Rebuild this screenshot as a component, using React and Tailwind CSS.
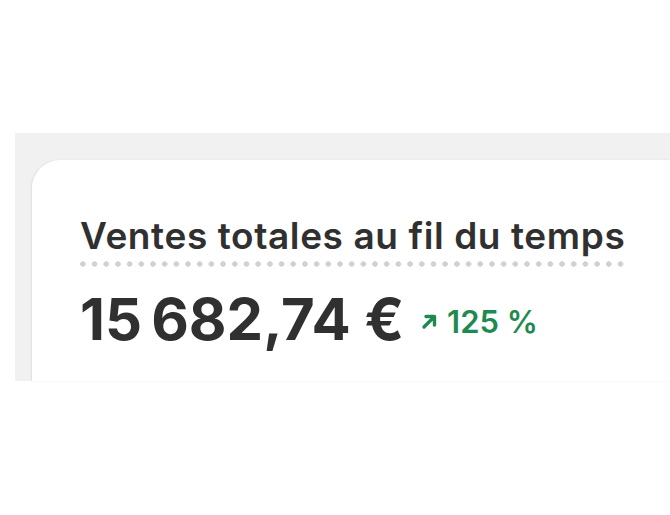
import React from 'react';

const ArrowUpRight = () => (
  <svg width="17" height="17" viewBox="0 0 17 17" className="shrink-0">
    <path d="M3 14 L12.5 4.5 M5 3.5 H13.5 V12" fill="none" stroke="currentColor" strokeWidth="3.4" strokeLinecap="round" strokeLinejoin="round" />
  </svg>
);

export default function App() {
  return (
    <div className="h-[515px] w-[670px] overflow-hidden bg-white pt-[133px] pl-[15px] font-['Inter',sans-serif]">
      <div className="h-[248px] bg-[#f1f1f1] pl-[17px] pt-[27px]">
        <div className="h-full rounded-tl-[28px] bg-white pl-[48px] pt-[53px] shadow-[-1px_0_2px_rgba(0,0,0,0.08)]">
          <div className="inline-block">
            <h2 className="text-[37px] leading-[45px] font-semibold tracking-[0.6px] text-[#303030]">
              Ventes totales au fil du temps
            </h2>
            <div className="mt-[3px] h-[6px] bg-[radial-gradient(circle,#d0d0d0_2.4px,transparent_3px)] bg-[length:11.7px_6px] bg-[position:-3px_0]" />
          </div>
          <div className="mt-[23px] flex items-start gap-[17px]">
            <span className="text-[58px] leading-[58px] font-bold tracking-[-0.5px] text-[#303030]">
              15{'\u202F'}682,74{'\u00A0'}€
            </span>
            <span className="mt-[13px] flex items-center gap-[9px] text-[31px] leading-[37px] font-semibold text-[#1f8a50]">
              <ArrowUpRight />
              125{'\u00A0'}%
            </span>
          </div>
        </div>
      </div>
    </div>
  );
}
